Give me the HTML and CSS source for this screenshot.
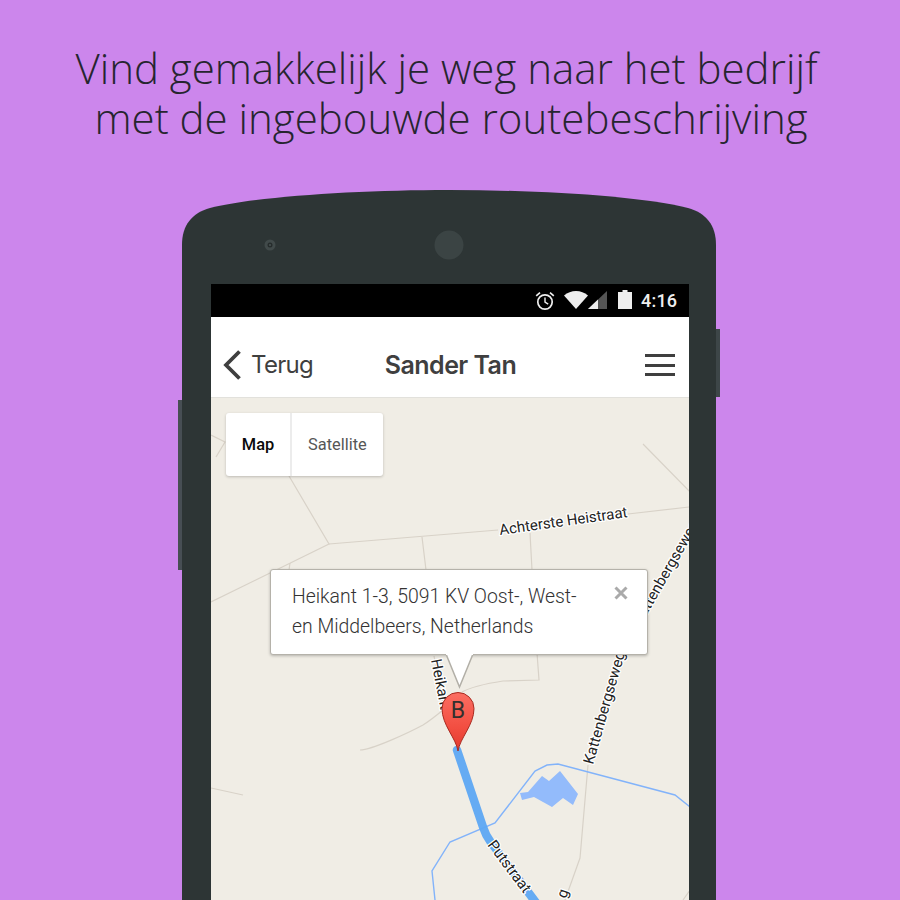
FILE: index.html
```html
<!DOCTYPE html>
<html lang="nl">
<head>
<meta charset="utf-8">
<title>Routebeschrijving</title>
<link rel="stylesheet" href="styles.css">
</head>
<body>
<h1 class="headline"><span class="line-one">Vind gemakkelijk je weg naar het bedrijf</span><span class="line-two">met de ingebouwde routebeschrijving</span></h1>
<div class="phone">
  <svg class="phone-body" viewBox="0 0 542 710" width="542" height="710" aria-hidden="true">
    <rect x="0" y="210" width="5" height="170" fill="#474e54"/>
    <rect x="537" y="139" width="5" height="68" fill="#3d4648"/>
    <path d="M4 710V55C4 35 14 23 32 18C82 6 182 0 271 0C362 0 462 6 510 18C528 23 538 35 538 55V710Z" fill="#2d3535"/>
    <circle cx="271" cy="55" r="14.5" fill="#3b4444"/>
    <circle cx="92" cy="55" r="5.5" fill="#414a4a"/>
    <circle cx="92" cy="55" r="2.5" fill="#262c2c"/>
    <circle cx="92" cy="55" r="1" fill="#4a5353"/>
  </svg>
  <div class="screen">
    <div class="status">
      <svg class="ic-alarm" viewBox="0 0 20 20" width="20" height="20"><circle cx="10" cy="11" r="7.2" fill="none" stroke="#eee" stroke-width="1.7"/><path d="M10 6.5V11.2L13.2 13.2" fill="none" stroke="#eee" stroke-width="1.4"/><path d="M1.2 4.8L5 1.6M18.8 4.8L15 1.6" stroke="#eee" stroke-width="1.7"/></svg>
      <svg class="ic-wifi" viewBox="0 0 24 18" width="24" height="18"><path d="M0 4.5C3.5 1.6 7.500 0 12 0C16.500 0 20.500 1.600 24 4.500L12 18Z" fill="#eee"/></svg>
      <svg class="ic-signal" viewBox="0 0 19 18" width="19" height="18"><path d="M0 18L19 0V18Z" fill="#555"/><path d="M0 18L10 8.500V18Z" fill="#eee"/></svg>
      <svg class="ic-battery" viewBox="0 0 14 19" width="14" height="19"><path d="M4.500 0H9.500V2H14V19H0V2H4.500Z" fill="#eee"/></svg>
      <span class="clock">4:16</span>
    </div>
    <header class="appbar">
      <div class="back">
        <svg viewBox="0 0 20 32" width="20" height="32"><path d="M17.500 2.500L4 16L17.500 29.500" fill="none" stroke="#3f3f3f" stroke-width="3.800"/></svg>
        <span>Terug</span>
      </div>
      <div class="title">Sander Tan</div>
      <div class="menu"><i></i><i></i><i></i></div>
    </header>
    <main class="map">
      <svg class="map-art" viewBox="211 398 478 502" width="478" height="502">
        <g class="road">
          <path d="M211 435L225 442L216 457"/>
          <path d="M289 476L329 544L211 602"/>
          <path d="M329 544L498 530M628 514L689 507"/>
          <path d="M422 537L426 570M530 533L532 570M643 444L690 492M290 563L289 570"/>
          <path d="M537 653L539 680L503 681C490 683 473 686 462 692"/>
          <path d="M360 750C372 750 410 732 423 725C431 720 437 715 443 710"/>
          <path d="M434 656L445 715L453 735"/>
          <path d="M588 765L580 858L565 900"/>
          <path d="M690 890L683 900"/>
          <path d="M211 788L243 795"/>
        </g>
        <path class="lake" d="M520 793L528 792L542 776L549 781L560 771L578 794L573 805L563 798L552 807L534 797L522 800Z"/>
        <path class="water" d="M435 900L432 871L450 842L495 823L535 771L547 765L558 764L675 795L690 807"/>
        <path class="route" d="M457 750L483 827C485 833 487 837 490 841L540 908"/>
        <g class="labels">
          <text transform="translate(500 535) rotate(-8)">Achterste Heistraat</text>
          <text transform="translate(641 625) rotate(-60)">Kattenbergseweg</text>
          <text transform="translate(593 765) rotate(-74)">Kattenbergseweg</text>
          <text transform="translate(431 660) rotate(79)">Heikant</text>
          <text transform="translate(487 845) rotate(53)">Putstraat</text>
          <text transform="translate(566 899) rotate(-72)">g</text>
        </g>
        <defs>
          <linearGradient id="pinfill" x1="0" y1="0" x2="0" y2="1"><stop offset="0" stop-color="#fb6e62"/><stop offset=".6" stop-color="#f24e41"/><stop offset="1" stop-color="#e23a2e"/></linearGradient>
        </defs>
        <path d="M458 751C456 738 442 725 442 708.500A16 16 0 0 1 474 708.500C474 725 460 738 458 751Z" fill="url(#pinfill)" stroke="#a92a20" stroke-width="1"/>
        <text class="pin-letter" x="458" y="718" text-anchor="middle">B</text>
      </svg>
      <div class="map-type">
        <div class="tab active">Map</div>
        <div class="tab">Satellite</div>
      </div>
      <div class="bubble">
        <p class="address">Heikant 1-3, 5091 KV Oost-, West-<br>en Middelbeers, Netherlands</p>
        <svg class="close" viewBox="0 0 14 14" width="14" height="14"><path d="M1.500 1.500L12.500 12.500M12.500 1.500L1.500 12.500" stroke="#aaa" stroke-width="3"/></svg>
        <svg class="tail" viewBox="0 0 30 35" width="30" height="35"><path d="M0 0L13.500 33L27 0" fill="#fff" stroke="#b2afa7" stroke-width="1.500"/><path d="M0 -1H27V1H0Z" fill="#fff"/></svg>
      </div>
    </main>
  </div>
</div>
</body>
</html>
```
FILE: styles.css
```css
* { box-sizing: border-box; }
html, body { margin: 0; height: 900px; overflow: hidden; }
body { background: #cc86ec; font-family: Roboto, "Liberation Sans", sans-serif; }

.headline {
  margin: 0;
  height: 190px;
  padding-top: 43px;
  font: 300 42px/50px "Open Sans", sans-serif;
  color: #26252f;
  text-align: center;
}
.line-one { display: block; margin-right: 7px; }
.line-two { display: block; margin-left: 2px; }

.phone {
  position: relative;
  width: 542px;
  height: 710px;
  margin-left: 178px;
  padding: 94px 0 0 33px;
}
.phone-body { position: absolute; left: 0; top: 0; }

.screen { position: relative; width: 478px; height: 616px; display: flex; flex-direction: column; }

.status {
  height: 33px;
  background: #000;
  display: flex;
  align-items: center;
  padding-left: 324px;
}
.ic-alarm { margin-right: 9px; }
.ic-wifi { margin-right: 0; margin-top: -2px; }
.ic-signal { margin-right: 11px; margin-top: -2px; }
.ic-battery { margin-right: 9px; margin-top: -2px; }
.clock { font: 500 18px/20px Roboto, sans-serif; color: #eee; letter-spacing: .2px; }

.appbar {
  height: 81px;
  background: #fff;
  border-bottom: 1px solid #e2e1dc;
  display: grid;
  grid-template-columns: 1fr auto 1fr;
  align-items: center;
  padding: 16px 14px 0 11px;
  color: #3f3f3f;
}
.back { display: flex; align-items: center; gap: 9px; font: 400 24px/32px Inter, "Liberation Sans", sans-serif; letter-spacing: -.7px; }
.title { margin-left: 4px; font: 600 25px/32px Inter, "Liberation Sans", sans-serif; letter-spacing: -.55px; }
.menu { justify-self: end; display: flex; flex-direction: column; gap: 6.500px; width: 30px; }
.menu i { display: block; height: 3px; background: #3f3f3f; }

.map { position: relative; flex: 1; background: #f0ede5; overflow: hidden; }
.map-art { position: absolute; left: 0; top: 0; display: block; }
.road { fill: none; stroke: #d8d2c8; stroke-width: 1.200; }
.lake { fill: #93bbfb; }
.water { fill: none; stroke: #82b3fa; stroke-width: 1.400; }
.route { fill: none; stroke: #5da8f3; stroke-width: 8.500; stroke-linecap: round; opacity: .95; }
.labels text {
  font: 400 15px Roboto, sans-serif;
  fill: #222;
  stroke: #fff;
  stroke-width: 2.500px;
  paint-order: stroke;
  stroke-linejoin: round;
}
.pin-letter { font: 400 23px Roboto, sans-serif; fill: #33302e; }

.map-type {
  position: absolute;
  left: 15px;
  top: 15px;
  display: flex;
  height: 63px;
  background: #fff;
  border-radius: 3px;
  box-shadow: 0 1px 3px rgba(0, 0, 0, .22);
}
.tab { display: flex; align-items: center; justify-content: center; padding: 0 16px; font-size: 16.400px; color: #565656; }
.tab.active { width: 66px; padding: 0; font-weight: 500; color: #0a0a0a; border-right: 2px solid #ececec; }

.bubble {
  position: absolute;
  left: 59px;
  top: 171px;
  width: 378px;
  height: 86px;
  background: #fff;
  border: 1px solid #b5b2aa;
  border-radius: 3px;
  box-shadow: 0 1px 3px rgba(0, 0, 0, .25);
  padding: 12px 21px;
}
.address { margin: 0; font: 300 19.400px/30px Roboto, sans-serif; color: #333; }
.close { position: absolute; right: 19px; top: 16px; }
.tail { position: absolute; left: 175px; top: 84px; overflow: visible; }
```
